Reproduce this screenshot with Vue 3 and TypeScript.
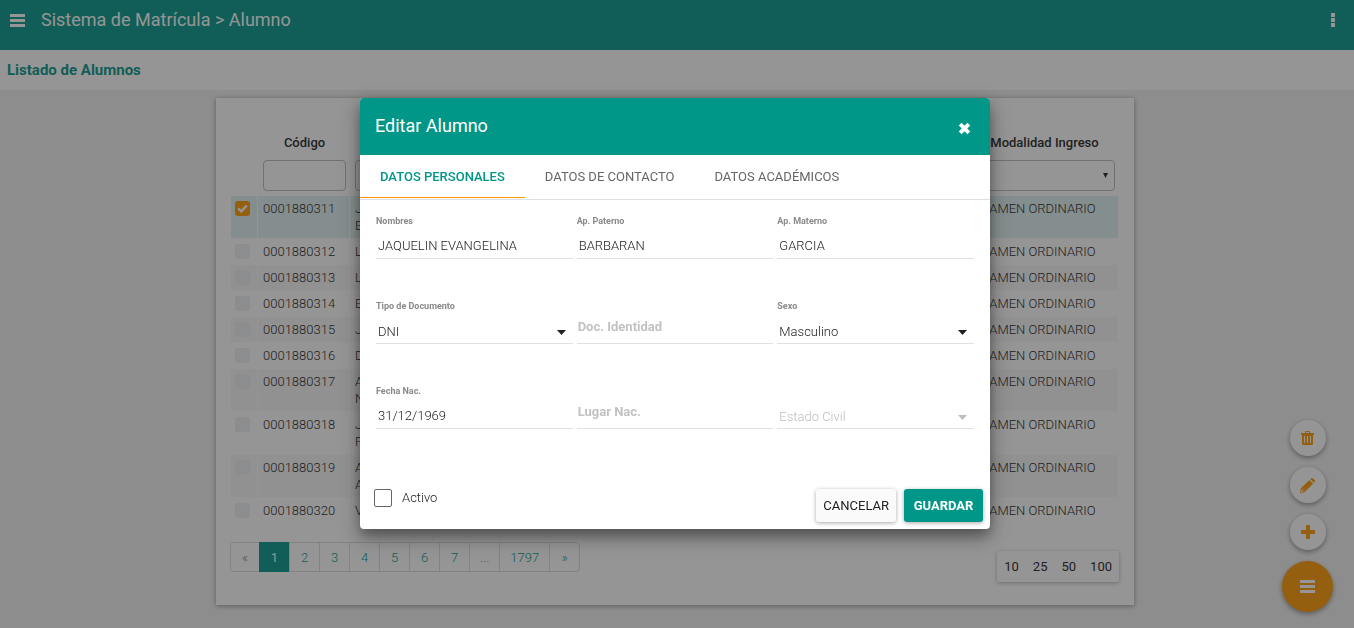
<script setup lang="ts">
import { reactive, ref } from 'vue'

interface Student {
  code: string
  name: string[]
  mode: string
  selected: boolean
}

const mode = 'EXAMEN ORDINARIO'
const initials: string[][] = [['J', 'E'], ['L'], ['L'], ['E'], ['J'], ['D'], ['A', 'N'], ['J', 'P'], ['A', 'A'], ['V']]
const students = reactive<Student[]>(
  initials.map((name, i) => ({ code: '0001880' + (311 + i), name, mode, selected: i === 0 })),
)

const pages: string[] = ['«', '1', '2', '3', '4', '5', '6', '7', '...', '1797', '»']
const currentPage = ref('1')
const pageSizes: number[] = [10, 25, 50, 100]

const tabs: string[] = ['Datos personales', 'Datos de contacto', 'Datos académicos']
const activeTab = ref(0)
const open = ref(true)

const form = reactive({
  nombres: 'JAQUELIN EVANGELINA',
  paterno: 'BARBARAN',
  materno: 'GARCIA',
  tipo: 'DNI',
  documento: '',
  sexo: 'Masculino',
  fecha: '31/12/1969',
  lugar: '',
  estado: '',
  activo: false,
})
</script>

<template>
  <div class="page">
    <header class="topbar">
      <button class="icon-btn" type="button" aria-label="Menú">
        <svg width="15" height="13" viewBox="0 0 15 13"><path d="M0 0h15v3H0zM0 5h15v3H0zM0 10h15v3H0z" fill="currentColor" /></svg>
      </button>
      <h1>Sistema de Matrícula &gt; Alumno</h1>
      <button class="icon-btn more" type="button" aria-label="Opciones">
        <svg width="4" height="14" viewBox="0 0 4 14"><path d="M0 0h4v4H0zM0 5h4v4H0zM0 10h4v4H0z" fill="currentColor" /></svg>
      </button>
    </header>
    <div class="subbar"><h2>Listado de Alumnos</h2></div>

    <main class="content">
      <section class="card">
        <table>
          <colgroup><col class="c-check" /><col class="c-code" /><col /><col class="c-mode" /></colgroup>
          <thead>
            <tr class="heads">
              <td></td>
              <th scope="col">Código</th>
              <td></td>
              <th scope="col">Modalidad Ingreso</th>
            </tr>
            <tr class="filters">
              <td></td>
              <td><input type="text" aria-label="Filtrar por código" /></td>
              <td><input type="text" aria-label="Filtrar por nombre" /></td>
              <td>
                <div class="filter-select">
                  <select aria-label="Filtrar por modalidad"><option></option></select>
                  <svg width="5" height="5" viewBox="0 0 5 5"><path d="M0 0h5L2.5 5z" fill="currentColor" /></svg>
                </div>
              </td>
            </tr>
          </thead>
          <tbody>
            <tr v-for="s in students" :key="s.code" :class="{ selected: s.selected }">
              <td class="check">
                <label>
                  <input v-model="s.selected" type="checkbox" :aria-label="s.code" />
                  <svg v-if="s.selected" width="11" height="9" viewBox="0 0 11 9"><path d="M1.2 4.4 4.2 7.3 9.8 1.5" fill="none" stroke="#fff" stroke-width="2.4" /></svg>
                </label>
              </td>
              <td>{{ s.code }}</td>
              <td><div v-for="(line, i) in s.name" :key="i">{{ line }}</div></td>
              <td>{{ s.mode }}</td>
            </tr>
          </tbody>
        </table>

        <div class="table-foot">
          <nav class="pager">
            <a
              v-for="p in pages"
              :key="p"
              href="#"
              :class="{ current: p === currentPage, muted: p === '«' || p === '...' }"
              @click.prevent="currentPage = p"
            >{{ p }}</a>
          </nav>
          <div class="sizes">
            <button v-for="n in pageSizes" :key="n" type="button">{{ n }}</button>
          </div>
        </div>
      </section>
    </main>

    <div class="fabs">
      <button class="fab" type="button" aria-label="Eliminar">
        <svg width="13" height="14" viewBox="0 0 13 14">
          <path d="M4 2V1a1 1 0 0 1 1-1h3a1 1 0 0 1 1 1v1h4v2H0V2zM5 2h3V1H5z" fill="currentColor" />
          <path fill-rule="evenodd" d="M1 4h11v9a1 1 0 0 1-1 1H2a1 1 0 0 1-1-1zM3 5v7h1V5zM6 5v7h1V5zM9 5v7h1V5z" fill="currentColor" />
        </svg>
      </button>
      <button class="fab" type="button" aria-label="Editar">
        <svg width="15" height="15" viewBox="0 0 15 15">
          <path d="M10.2 1 11.1.3a1.2 1.2 0 0 1 1.6 0l2 2a1.2 1.2 0 0 1 0 1.6l-.8.8zM9.3 1.9l3.8 3.8-7.8 7.8-3.8-3.8z" fill="currentColor" />
          <path fill-rule="evenodd" d="M.9 9.6 5.4 14.1 0 15zM1.6 11.6.9 14.1l2.5-.7z" fill="currentColor" />
        </svg>
      </button>
      <button class="fab" type="button" aria-label="Agregar">
        <svg width="14" height="14" viewBox="0 0 14 14"><path d="M5 0h4v5h5v4H9v5H5V9H0V5h5z" fill="currentColor" /></svg>
      </button>
      <button class="fab main" type="button" aria-label="Acciones">
        <svg width="15" height="13" viewBox="0 0 15 13"><path d="M0 0h15v3H0zM0 5h15v3H0zM0 10h15v3H0z" fill="currentColor" /></svg>
      </button>
    </div>

    <div v-if="open" class="backdrop">
      <form class="dialog" role="dialog" aria-labelledby="dlg-title" @submit.prevent>
        <div class="dialog-head">
          <h3 id="dlg-title">Editar Alumno</h3>
          <button class="icon-btn close" type="button" aria-label="Cerrar" @click="open = false">
            <svg width="13" height="13" viewBox="0 0 13 13"><path d="M2.2 2.2l8.6 8.6M10.8 2.2l-8.6 8.6" stroke="currentColor" stroke-width="4" fill="none" /></svg>
          </button>
        </div>
        <div class="tabs" role="tablist">
          <button
            v-for="(t, i) in tabs"
            :key="t"
            type="button"
            role="tab"
            :aria-selected="i === activeTab"
            :class="{ active: i === activeTab }"
            @click="activeTab = i"
          >{{ t }}</button>
        </div>

        <div class="fields">
          <div class="field">
            <label for="nombres">Nombres</label>
            <input id="nombres" v-model="form.nombres" type="text" />
          </div>
          <div class="field">
            <label for="paterno">Ap. Paterno</label>
            <input id="paterno" v-model="form.paterno" type="text" />
          </div>
          <div class="field">
            <label for="materno">Ap. Materno</label>
            <input id="materno" v-model="form.materno" type="text" />
          </div>
          <div class="field">
            <label for="tipo">Tipo de Documento</label>
            <div class="select">
              <select id="tipo" v-model="form.tipo"><option>DNI</option></select>
              <svg width="9" height="5" viewBox="0 0 9 5"><path d="M0 0h9L4.5 5z" fill="currentColor" /></svg>
            </div>
          </div>
          <div class="field empty">
            <label for="documento">Doc. Identidad</label>
            <input id="documento" v-model="form.documento" type="text" />
          </div>
          <div class="field">
            <label for="sexo">Sexo</label>
            <div class="select">
              <select id="sexo" v-model="form.sexo"><option>Masculino</option></select>
              <svg width="9" height="5" viewBox="0 0 9 5"><path d="M0 0h9L4.5 5z" fill="currentColor" /></svg>
            </div>
          </div>
          <div class="field">
            <label for="fecha">Fecha Nac.</label>
            <input id="fecha" v-model="form.fecha" type="text" />
          </div>
          <div class="field empty">
            <label for="lugar">Lugar Nac.</label>
            <input id="lugar" v-model="form.lugar" type="text" />
          </div>
          <div class="field unlabelled">
            <div class="select placeholder">
              <select v-model="form.estado" aria-label="Estado Civil"><option value="">Estado Civil</option></select>
              <svg width="9" height="5" viewBox="0 0 9 5"><path d="M0 0h9L4.5 5z" fill="currentColor" /></svg>
            </div>
          </div>
        </div>

        <div class="dialog-foot">
          <label class="active-check"><input v-model="form.activo" type="checkbox" />Activo</label>
          <button class="btn" type="button" @click="open = false">Cancelar</button>
          <button class="btn primary" type="submit">Guardar</button>
        </div>
      </form>
    </div>
  </div>
</template>

<style>
html,
body {
  margin: 0;
  background: #f0f0f0;
}
</style>

<style scoped>
.page,
.page * {
  box-sizing: border-box;
}
.page {
  min-height: 100vh;
  font: 300 13px/17px Roboto, sans-serif;
  color: #212121;
}
h1,
h2,
h3 {
  margin: 0;
}
button,
input,
select {
  font: inherit;
  color: inherit;
  margin: 0;
}
button {
  border: 0;
  background: none;
  cursor: pointer;
}
svg {
  display: block;
}
.icon-btn {
  display: flex;
  padding: 0;
}
.topbar {
  display: flex;
  align-items: center;
  gap: 16px;
  height: 50px;
  padding: 0 19px 10px 10px;
  background: #009688;
  color: #fff;
}
.topbar h1 {
  font-size: 18px;
  line-height: 24px;
  font-weight: 400;
}
.more {
  margin-left: auto;
}
.subbar {
  display: flex;
  align-items: center;
  height: 40px;
  padding: 0 7px;
  background: #fff;
}
.subbar h2 {
  font-size: 15px;
  line-height: 20px;
  font-weight: 700;
  color: #009688;
}
.content {
  padding: 8px 4px 0 0;
}
.card {
  width: 68%;
  margin: 0 auto;
  padding: 31px 15px 23px 14px;
  background: #fff;
  box-shadow: 0 1px 5px rgba(0, 0, 0, 0.4);
}
table {
  width: 100%;
  table-layout: fixed;
  border-spacing: 1px;
}
.c-check {
  width: 26px;
}
.c-code {
  width: 91px;
}
.c-mode {
  width: 149px;
}
th,
td {
  padding: 4px 5px;
  vertical-align: top;
  text-align: left;
}
.heads > * {
  height: 24px;
  padding: 4px 0 3px 2px;
  font-weight: 500;
  text-align: center;
}
.filters td {
  padding: 5px 3px 4px 5px;
}
.filters input,
.filters select {
  display: block;
  width: 100%;
  height: 31px;
  padding: 0 8px;
  border: 1px solid #bbb;
  border-radius: 4px;
  background: #fff;
  appearance: none;
}
.filter-select,
.select {
  display: grid;
  align-items: center;
}
.filter-select > *,
.select > * {
  grid-area: 1 / 1;
}
.filter-select svg,
.select svg {
  justify-self: end;
  pointer-events: none;
}
.filter-select svg {
  margin-right: 7px;
}
tbody tr:nth-child(odd) td {
  background: #f8f8f8;
}
tbody tr.selected td {
  background: #e0f2f1;
}
td.check {
  padding: 5px 4px;
}
.check label {
  display: grid;
  place-items: center;
  width: 15px;
  height: 15px;
}
.check label > * {
  grid-area: 1 / 1;
}
.check input {
  appearance: none;
  width: 15px;
  height: 15px;
  border-radius: 3px;
  background: #eceff1;
}
.check input:checked {
  background: #ff9800;
}
.check svg {
  z-index: 0;
}
.table-foot {
  display: flex;
  justify-content: space-between;
  align-items: flex-start;
  margin-top: 18px;
}
.pager {
  display: flex;
  height: 30px;
  border: 1px solid #ddd;
  border-radius: 4px;
}
.pager a {
  min-width: 28px;
  padding: 6px 10px;
  color: #009688;
  text-align: center;
  text-decoration: none;
}
.pager a + a {
  min-width: 30px;
  border-left: 1px solid #ddd;
}
.pager a.muted {
  color: #777;
}
.pager a.current {
  margin: -1px 0;
  padding: 7px 10px;
  border-color: #009688;
  background: #009688;
  color: #fff;
  font-weight: 400;
}
.sizes {
  display: flex;
  gap: 14px;
  height: 31px;
  margin-top: 9px;
  padding: 0 7px;
  border-radius: 2px;
  box-shadow: 0 1px 4px rgba(0, 0, 0, 0.3);
}
.sizes button {
  padding: 0;
  font-weight: 400;
}
.fabs {
  position: fixed;
  right: 21px;
  bottom: 16px;
  display: flex;
  flex-direction: column;
  align-items: center;
  gap: 11px;
}
.fab {
  display: flex;
  align-items: center;
  justify-content: center;
  width: 36px;
  height: 36px;
  padding: 0;
  border-radius: 50%;
  background: #fff;
  color: #ff9800;
  box-shadow: 0 2px 5px rgba(0, 0, 0, 0.4);
}
.fab.main {
  width: 51px;
  height: 51px;
  background: #ff9800;
  color: #fff;
}
.backdrop {
  position: fixed;
  inset: 0;
  display: flex;
  align-items: center;
  justify-content: center;
  padding: 0 4px 1px 0;
  background: rgba(33, 33, 33, 0.48);
}
.dialog {
  width: 100%;
  max-width: 630px;
  border-radius: 4px;
  overflow: hidden;
  background: #fff;
  box-shadow: 0 7px 14px rgba(0, 0, 0, 0.35), 0 8px 24px rgba(0, 0, 0, 0.2);
}
.dialog-head {
  display: flex;
  align-items: center;
  justify-content: space-between;
  height: 57px;
  padding: 0 19px 1px 15px;
  background: #009688;
  color: #fff;
}
.dialog-head h3 {
  font-size: 18px;
  line-height: 24px;
  font-weight: 400;
}
.close {
  padding-top: 4px;
}
.tabs {
  display: flex;
  height: 45px;
  padding-bottom: 1px;
  border-bottom: 1px solid #e0e0e0;
}
.tabs button {
  padding: 0 20px;
  border-bottom: 1px solid transparent;
  font-weight: 400;
  color: #666;
  text-transform: uppercase;
}
.tabs button.active {
  border-bottom-color: #ff9800;
  font-weight: 500;
  color: #009688;
}
.fields {
  display: grid;
  grid-template-columns: repeat(3, 1fr);
  grid-auto-rows: 85px;
  column-gap: 4px;
  padding: 14px 16px 0;
}
.field {
  display: flex;
  flex-direction: column;
}
.field > label {
  font-size: 9px;
  line-height: 15px;
  font-weight: 700;
  color: #8a8a8a;
}
.field > input,
.select {
  height: 30px;
  border: 0;
  border-bottom: 1px solid #e0e0e0;
}
.field > input {
  width: 100%;
  padding: 4px 2px 0;
  background: transparent;
  outline: 0;
}
.select select {
  width: 100%;
  height: 29px;
  padding: 6px 2px 0;
  border: 0;
  background: transparent;
  appearance: none;
}
.select svg {
  margin: 7px 7px 0 0;
}
.placeholder {
  color: #bdbdbd;
}
.unlabelled {
  padding-top: 15px;
}
.field.empty {
  display: grid;
  align-content: start;
}
.field.empty > * {
  grid-area: 1 / 1;
}
.field.empty > label {
  padding: 19px 0 9px 1px;
  font-size: 13px;
  line-height: 17px;
  color: #c2c2c2;
}
.field.empty > input {
  align-self: end;
}
.dialog-foot {
  display: flex;
  align-items: flex-start;
  gap: 8px;
  margin-top: 20px;
  padding: 0 7px 7px 14px;
}
.active-check {
  display: flex;
  align-items: center;
  gap: 10px;
  margin-right: auto;
  line-height: 18px;
}
.active-check input {
  appearance: none;
  width: 18px;
  height: 18px;
  border: 1px solid #666;
  border-radius: 2px;
}
.btn {
  min-width: 79px;
  height: 33px;
  padding: 0 7px;
  border-radius: 3px;
  background: #fafafa;
  font-weight: 400;
  text-transform: uppercase;
  box-shadow: 0 1px 4px rgba(0, 0, 0, 0.35);
}
.btn.primary {
  background: #009688;
  color: #fff;
  font-weight: 700;
}
</style>
